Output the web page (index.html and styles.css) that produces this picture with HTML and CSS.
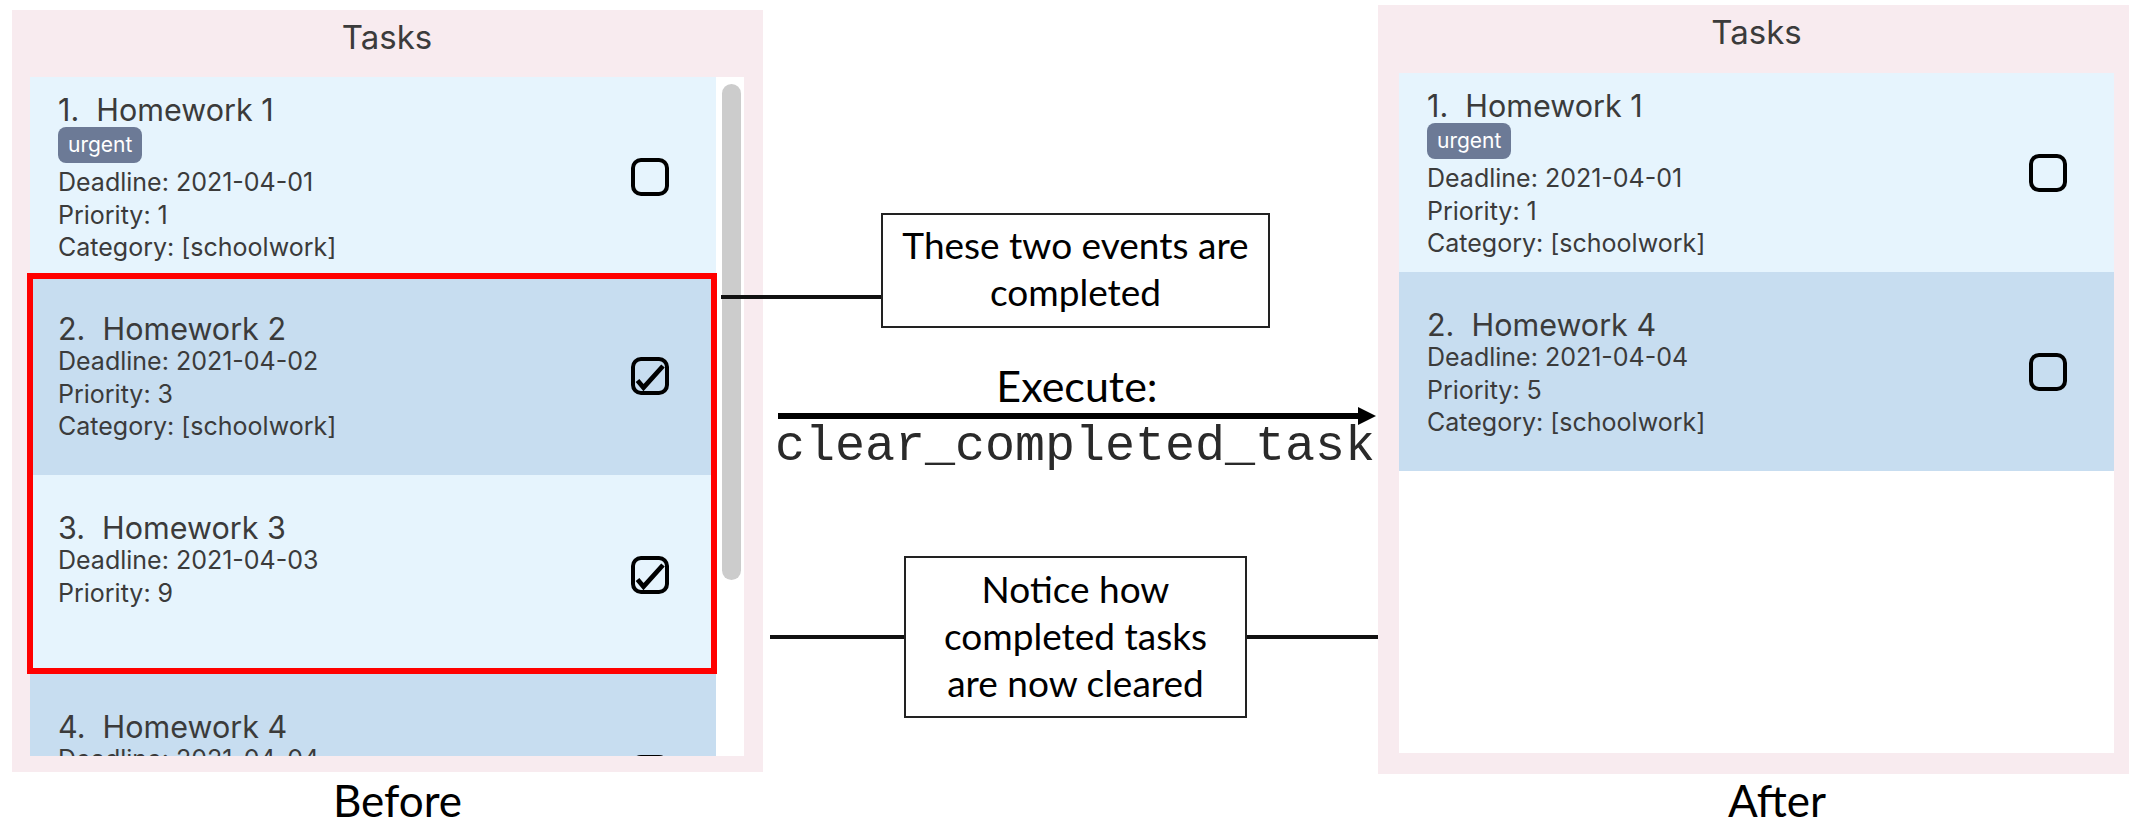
FILE: index.html
```html
<!DOCTYPE html>
<html lang="en">
<head>
    <meta charset="UTF-8">
    <meta name="viewport" content="width=device-width, initial-scale=1.0">
    <title>Clear completed tasks - Before and After</title>
    <link rel="stylesheet" href="styles.css">
</head>
<body>
    <div class="shot before">
        <div class="panel">
            <div class="panel-title">Tasks</div>
            <div class="list-box">
                <div class="list">
                    <div class="card light">
                        <div class="card-body">
                            <div class="task-name">1.&nbsp;&nbsp;Homework 1</div>
                            <div class="tags"><span class="tag">urgent</span></div>
                            <div class="field">Deadline: 2021-04-01</div>
                            <div class="field">Priority: 1</div>
                            <div class="field">Category: [schoolwork]</div>
                        </div>
                        <svg class="check" viewBox="0 0 38 38"><rect x="2" y="2" width="34" height="34" rx="8"/></svg>
                    </div>
                    <div class="card dark">
                        <div class="card-body">
                            <div class="task-name">2.&nbsp;&nbsp;Homework 2</div>
                            <div class="field">Deadline: 2021-04-02</div>
                            <div class="field">Priority: 3</div>
                            <div class="field">Category: [schoolwork]</div>
                        </div>
                        <svg class="check" viewBox="0 0 38 38"><rect x="2" y="2" width="34" height="34" rx="8"/><path d="M6.5 23.5 L12.5 30.5 L32 9"/></svg>
                    </div>
                    <div class="card light">
                        <div class="card-body">
                            <div class="task-name">3.&nbsp;&nbsp;Homework 3</div>
                            <div class="field">Deadline: 2021-04-03</div>
                            <div class="field">Priority: 9</div>
                            <div class="field">&nbsp;</div>
                        </div>
                        <svg class="check" viewBox="0 0 38 38"><rect x="2" y="2" width="34" height="34" rx="8"/><path d="M6.5 23.5 L12.5 30.5 L32 9"/></svg>
                    </div>
                    <div class="card dark">
                        <div class="card-body">
                            <div class="task-name">4.&nbsp;&nbsp;Homework 4</div>
                            <div class="field">Deadline: 2021-04-04</div>
                            <div class="field">Priority: 5</div>
                            <div class="field">Category: [schoolwork]</div>
                        </div>
                        <svg class="check" viewBox="0 0 38 38"><rect x="2" y="2" width="34" height="34" rx="8"/></svg>
                    </div>
                </div>
                <div class="scroll-track"><div class="scroll-thumb"></div></div>
                <!-- red frame round the two completed tasks -->
                <div class="highlight"></div>
            </div>
        </div>
        <div class="caption">Before</div>
    </div>

    <div class="middle">
        <div class="note-row first">
            <div class="connector c1"></div>
            <div class="note n1">These two events are<br>completed</div>
        </div>
        <div class="command">
            <div class="cmd-label">Execute:</div>
            <div class="arrow"><div class="shaft"></div><div class="head"></div></div>
            <div class="cmd-code">clear_completed_task</div>
        </div>
        <div class="note-row second">
            <div class="connector c2"></div>
            <div class="note n2">Notice how<br>completed tasks<br>are now cleared</div>
            <div class="connector c3"></div>
        </div>
    </div>

    <div class="shot after">
        <div class="panel">
            <div class="panel-title">Tasks</div>
            <div class="list-box">
                <div class="list">
                    <div class="card light">
                        <div class="card-body">
                            <div class="task-name">1.&nbsp;&nbsp;Homework 1</div>
                            <div class="tags"><span class="tag">urgent</span></div>
                            <div class="field">Deadline: 2021-04-01</div>
                            <div class="field">Priority: 1</div>
                            <div class="field">Category: [schoolwork]</div>
                        </div>
                        <svg class="check" viewBox="0 0 38 38"><rect x="2" y="2" width="34" height="34" rx="8"/></svg>
                    </div>
                    <div class="card dark">
                        <div class="card-body">
                            <div class="task-name">2.&nbsp;&nbsp;Homework 4</div>
                            <div class="field">Deadline: 2021-04-04</div>
                            <div class="field">Priority: 5</div>
                            <div class="field">Category: [schoolwork]</div>
                        </div>
                        <svg class="check" viewBox="0 0 38 38"><rect x="2" y="2" width="34" height="34" rx="8"/></svg>
                    </div>
                </div>
            </div>
        </div>
        <div class="caption">After</div>
    </div>
</body>
</html>
```

FILE: styles.css
```css
body {
    margin: 0;
    width: 2141px;
    height: 826px;
    overflow: hidden;
    background-color: #ffffff;
    display: flex;
    align-items: flex-start;
    font-family: 'Inter', 'Roboto', sans-serif;
    color: #3b3b3b;
}
.shot {
    width: 751px;
    flex-shrink: 0;
    display: flex;
    flex-direction: column;
}
.before {
    margin-left: 12px;
    margin-top: 10px;
}
.after {
    margin-top: 5px;
}
.panel {
    background-color: #f8ebef;
    box-sizing: border-box;
    display: flex;
    flex-direction: column;
    flex-shrink: 0;
}
.before .panel {
    height: 762px;
    padding: 0 19px 16px 18px;
}
.after .panel {
    height: 769px;
    padding: 0 15px 21px 21px;
}
.panel-title {
    box-sizing: border-box;
    flex-shrink: 0;
    height: 67px;
    padding-top: 7px;
    font-size: 33px;
    line-height: 40px;
    text-align: center;
}
.after .panel-title {
    height: 68px;
}
.list-box {
    position: relative;
    flex: 1;
    min-height: 0;
    display: flex;
    background-color: #ffffff;
}
.list {
    flex: 1;
    overflow: hidden;
}
.card {
    height: 199px;
    box-sizing: border-box;
    padding: 0 47px 0 28px;
    display: flex;
    align-items: center;
}
.card.light {
    background-color: #e6f4fd;
}
.card.dark {
    background-color: #c7ddf0;
}
.card-body {
    flex: 1;
    padding-top: 4px;
}
.task-name {
    font-size: 30.5px;
    line-height: 32.5px;
}
.field {
    font-size: 25px;
    line-height: 32.5px;
}
.tags {
    margin: 1px 0 3px;
}
.tag {
    display: inline-block;
    height: 36px;
    padding: 0 10px;
    border-radius: 8px;
    background-color: #6c7a96;
    color: #ffffff;
    font-size: 21px;
    line-height: 35px;
}
.check {
    width: 38px;
    height: 38px;
    flex-shrink: 0;
    fill: none;
    stroke: #000000;
    stroke-width: 4;
}
.check path {
    stroke-width: 4.8;
}
.scroll-track {
    width: 28px;
    flex-shrink: 0;
}
.scroll-thumb {
    width: 19px;
    height: 496px;
    margin: 7px 0 0 6px;
    border-radius: 10px;
    background-color: #cccccc;
}
.highlight {
    position: absolute;
    left: -3px;
    top: 196px;
    width: 690px;
    height: 401px;
    box-sizing: border-box;
    border: 6px solid #ff0000;
}
.caption {
    font-family: 'Lato', 'Open Sans', sans-serif;
    font-size: 44px;
    line-height: 50px;
    color: #000000;
    text-align: center;
}
.before .caption {
    margin-top: 3px;
    padding-left: 20px;
}
.after .caption {
    margin-top: 1px;
    padding-left: 47px;
}

/* annotations between the two screenshots */
.middle {
    width: 615px;
    flex-shrink: 0;
    font-family: 'Lato', 'Open Sans', sans-serif;
    color: #000000;
}
.note-row {
    position: relative;
    z-index: 2;
    display: flex;
    align-items: flex-start;
}
.note-row.first {
    margin: 213px 0 0 -42px;
}
.note-row.second {
    margin: 84px 0 0 7px;
}
.connector {
    height: 4px;
    background-color: #111111;
}
.c1 {
    width: 160px;
    margin-top: 82px;
}
.c2 {
    width: 134px;
    margin-top: 79px;
}
.c3 {
    width: 131px;
    margin-top: 79px;
}
.note {
    box-sizing: border-box;
    border: 2px solid #222222;
    background-color: #ffffff;
    text-align: center;
    font-size: 37px;
    line-height: 47px;
}
.n1 {
    width: 389px;
    height: 115px;
    padding-top: 6px;
}
.n2 {
    width: 344px;
    height: 162px;
    padding-top: 7px;
}
.command {
    width: 598px;
    margin: 36px 0 0 15px;
}
.cmd-label {
    font-size: 43px;
    line-height: 44px;
    text-align: center;
}
.arrow {
    display: flex;
    align-items: center;
    height: 18px;
    margin-top: -1px;
}
.shaft {
    flex: 1;
    height: 6px;
    background-color: #000000;
}
.head {
    width: 0;
    height: 0;
    border-left: 18px solid #000000;
    border-top: 9px solid transparent;
    border-bottom: 9px solid transparent;
}
.cmd-code {
    margin: -3px 0 0 -3px;
    font-family: 'Liberation Mono', 'Courier New', monospace;
    font-size: 50px;
    line-height: 50px;
    white-space: nowrap;
    color: #2a2a2a;
}
```
